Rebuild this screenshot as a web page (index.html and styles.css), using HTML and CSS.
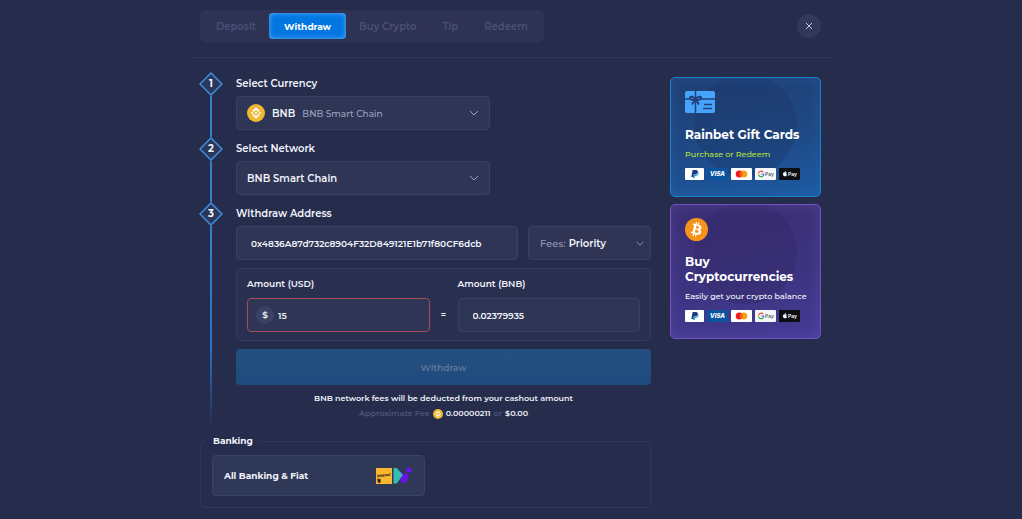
FILE: index.html
```html
<!DOCTYPE html>
<html lang="en">
<head>
    <meta charset="UTF-8">
    <meta name="viewport" content="width=device-width, initial-scale=1.0">
    <title>Withdraw</title>
    <link rel="stylesheet" href="styles.css">
</head>
<body>
    <!-- Shared logos -->
    <svg class="sprite" aria-hidden="true">
        <symbol id="bnb" viewBox="0 0 24 24">
            <circle cx="12" cy="12" r="12" fill="#f0b732"/>
            <path fill="#fff" d="M8.4 10.6 12 7l3.6 3.6 2.1-2.1L12 2.8 6.3 8.5zM3.8 12l2.1-2.1L8 12l-2.1 2.1zM8.4 13.4 12 17l3.6-3.6 2.1 2.1-5.7 5.7-5.7-5.7zM16 12l2.1-2.1 2.1 2.1-2.1 2.1zM12 9.8l2.2 2.2-2.2 2.2L9.8 12z" transform="translate(1.8 1.8) scale(.85)"/>
        </symbol>
        <symbol id="paypal" viewBox="0 0 19 12">
            <rect width="19" height="12" rx="1" fill="#fff"/>
            <path fill="#1b3d82" d="M7.6 2h3.2c1.7 0 2.4 1 2.1 2.3-.3 1.6-1.5 2.3-3 2.3H8.8L8.4 9H6.3z"/>
            <path fill="#179bd7" d="M13.2 4.2c.5.5.5 1.2.3 1.9-.4 1.3-1.4 1.8-2.7 1.8H10L9.6 10H7.9l.5-2.9h1.7c1.6 0 2.800-1 3.100-2.900z"/>
        </symbol>
        <symbol id="visa" viewBox="0 0 21 12">
            <rect width="21" height="12" rx="1" fill="#0a54a0"/>
            <text x="10.5" y="8.3" class="logo-text visa-text" fill="#fff">VISA</text>
        </symbol>
        <symbol id="mastercard" viewBox="0 0 21 12">
            <rect width="21" height="12" rx="1" fill="#fff"/>
            <circle cx="8.3" cy="6" r="3.6" fill="#eb1c26"/>
            <circle cx="12.7" cy="6" r="3.6" fill="#f79e1b"/>
            <path fill="#ff5f00" d="M10.5 3.2a3.6 3.6 0 0 1 0 5.6 3.6 3.6 0 0 1 0-5.6z"/>
        </symbol>
        <symbol id="gpay" viewBox="0 0 21 12">
            <rect width="21" height="12" rx="1" fill="#f5f6fa"/>
            <g fill="none" stroke-width="1.2">
                <path stroke="#ea4335" d="M3.6 4.9a2.7 2.7 0 0 1 4.5-.8"/>
                <path stroke="#fbbc05" d="M3.6 4.9a2.7 2.7 0 0 0 0 2.2"/>
                <path stroke="#34a853" d="M3.6 7.1a2.7 2.7 0 0 0 4.3.9"/>
                <path stroke="#4285f4" d="M6.1 6h2.7a2.7 2.7 0 0 1-.9 2"/>
            </g>
            <text x="14.5" y="8" class="logo-text" fill="#5f6368">Pay</text>
        </symbol>
        <symbol id="applepay" viewBox="0 0 21 12">
            <rect width="21" height="12" rx="1" fill="#0c0d12"/>
            <path fill="#fff" d="M6 4.4c.5-.3 1.4-.3 1.8.3-.8.5-.7 1.7.2 2.1-.3.8-.8 1.6-1.4 1.5-.4-.2-.7-.2-1.1 0C4.6 8.4 4 7.1 4 6.1c0-1.5 1.2-2.1 2-1.700zM5.900 4.100c0-.8.5-1.300 1.100-1.400 0 .8-.4 1.300-1.100 1.400z"/>
            <text x="13.5" y="8.2" class="logo-text" fill="#fff">Pay</text>
        </symbol>
    </svg>

    <div class="cashier">
        <header class="cashier-header">
            <nav class="tabs">
                <button type="button" class="tab">Deposit</button>
                <button type="button" class="tab active">Withdraw</button>
                <button type="button" class="tab">Buy Crypto</button>
                <button type="button" class="tab">Tip</button>
                <button type="button" class="tab">Redeem</button>
            </nav>
            <button type="button" class="close" aria-label="Close">
                <svg width="8" height="8" viewBox="0 0 8 8"><path d="M1 1l6 6M7 1L1 7"/></svg>
            </button>
        </header>

        <div class="cashier-body">
            <main class="main">
                <form class="steps">
                    <section class="step">
                        <div class="marker">
                            <svg class="diamond" viewBox="0 0 24 24"><path d="M12 1l11 11-11 11L1 12z"/></svg>
                            <span class="number">1</span>
                        </div>
                        <div class="step-content">
                            <label class="step-title" for="currency">Select Currency</label>
                            <div class="field narrow">
                                <svg class="coin" viewBox="0 0 24 24"><use href="#bnb"/></svg>
                                <span class="ticker">BNB</span>
                                <select id="currency" class="select muted">
                                    <option>BNB Smart Chain</option>
                                </select>
                            </div>
                        </div>
                    </section>

                    <section class="step">
                        <div class="marker">
                            <svg class="diamond" viewBox="0 0 24 24"><path d="M12 1l11 11-11 11L1 12z"/></svg>
                            <span class="number">2</span>
                        </div>
                        <div class="step-content">
                            <label class="step-title" for="network">Select Network</label>
                            <div class="field narrow">
                                <select id="network" class="select">
                                    <option>BNB Smart Chain</option>
                                </select>
                            </div>
                        </div>
                    </section>

                    <section class="step last">
                        <div class="marker">
                            <svg class="diamond" viewBox="0 0 24 24"><path d="M12 1l11 11-11 11L1 12z"/></svg>
                            <span class="number">3</span>
                        </div>
                        <div class="step-content">
                            <label class="step-title" for="address">Withdraw Address</label>
                            <div class="address-row">
                                <div class="field address">
                                    <input id="address" class="input" type="text" value="0x4836A87d732c8904F32D849121E1b71f80CF6dcb">
                                </div>
                                <div class="field fees">
                                    <label for="fees">Fees:</label>
                                    <select id="fees" class="select small">
                                        <option>Priority</option>
                                    </select>
                                </div>
                            </div>

                            <div class="amounts">
                                <div class="amount">
                                    <label for="usd">Amount (USD)</label>
                                    <div class="field error">
                                        <span class="dollar">$</span>
                                        <input id="usd" class="input" type="text" value="15">
                                    </div>
                                </div>
                                <span class="equals">=</span>
                                <div class="amount">
                                    <label for="bnb-amount">Amount (BNB)</label>
                                    <div class="field indent">
                                        <input id="bnb-amount" class="input" type="text" value="0.02379935">
                                    </div>
                                </div>
                            </div>

                            <button type="submit" class="submit" disabled>Withdraw</button>

                            <p class="note">BNB network fees will be deducted from your cashout amount</p>
                            <p class="note fee">
                                Approximate Fee
                                <svg class="coin-small" viewBox="0 0 24 24"><use href="#bnb"/></svg>
                                <strong>0.00000211</strong> or <strong>$0.00</strong>
                            </p>
                        </div>
                    </section>
                </form>

                <fieldset class="banking">
                    <legend>Banking</legend>
                    <button type="button" class="bank">
                        <span>All Banking &amp; Fiat</span>
                        <svg width="36" height="18" viewBox="0 0 36 18" aria-hidden="true">
                            <path fill="#6d0ff0" d="M25 3.5l2.7 4.3c1.2-.1 2.2-.8 2.5-2.3l2.6 2.4c-1.8 1.3-1.2 2.8-1.3 4.1-.4 2.9-2.7 4.5-6.5 4z"/>
                            <circle cx="33" cy="3" r="2.6" fill="#6d0ff0"/>
                            <path fill="#35bdb2" d="M17.5 1h3.3l6 7-6 8.5h-3.3z"/>
                            <rect y="1" width="16" height="16" fill="#fdb72c"/>
                            <text x="8" y="9.5" transform="rotate(-8 8 9)" class="logo-text interac-text" fill="#292522">Interac</text>
                            <path fill="#292522" d="M1.3 12l1-.8.7 1.2.7-.8 1.1 1-.3 2.7-1.5 1-1.3-1.5z"/>
                        </svg>
                    </button>
                </fieldset>
            </main>

            <aside class="promos">
                <a href="#" class="promo gift">
                    <span class="promo-icon">
                        <svg width="30" height="22" viewBox="0 0 30 22" aria-hidden="true">
                            <rect width="30" height="22" rx="2" fill="#45a5fb"/>
                            <path fill="none" stroke="#203f7c" stroke-width="1.5" d="M0 8h30M10.5 0v22"/>
                            <path fill="#45a5fb" stroke="#203f7c" stroke-width="2" d="M10.5 8.5C8 5 5 5 5 7s3 2.5 5.5 1.5zM10.5 8.5C13 5 16 5 16 7s-3 2.5-5.5 1.5z"/>
                            <path fill="none" stroke="#203f7c" stroke-width="2" d="M10.5 8.5l-3.5 5M10.5 8.5l3.5 5"/>
                            <path fill="none" stroke="#203f7c" stroke-width="1.5" d="M19 13.5h8M18 17.5h9"/>
                        </svg>
                    </span>
                    <span class="promo-title">Rainbet Gift Cards</span>
                    <span class="promo-text lime">Purchase or Redeem</span>
                    <span class="payments">
                        <svg width="19" height="12"><use href="#paypal"/></svg>
                        <svg width="21" height="12"><use href="#visa"/></svg>
                        <svg width="21" height="12"><use href="#mastercard"/></svg>
                        <svg width="21" height="12"><use href="#gpay"/></svg>
                        <svg width="21" height="12"><use href="#applepay"/></svg>
                    </span>
                </a>
                <a href="#" class="promo crypto">
                    <span class="promo-icon">
                        <svg width="23" height="23" viewBox="0 0 64 64" aria-hidden="true">
                            <circle cx="32" cy="32" r="32" fill="#f7931a"/>
                            <path fill="#fff" d="M46.1 27.4c.6-4.3-2.6-6.5-7-8l1.4-5.8-3.5-.9-1.4 5.6-2.8-.7 1.4-5.6-3.5-.9-1.4 5.8-2.2-.6-4.9-1.2-.9 3.7s2.6.6 2.5.6c1.4.4 1.7 1.3 1.6 2l-4 16c-.2.4-.6 1.1-1.6.8l-2.5-.6-1.8 4 6.9 1.7-1.5 5.9 3.5.9 1.5-5.8 2.8.7-1.5 5.8 3.5.9 1.5-5.9c6 1.1 10.5.7 12.4-4.7 1.5-4.4-.1-6.9-3.2-8.5 2.3-.5 4-2 4.7-5.2zm-8.1 11.3c-1.1 4.3-8.4 2-10.8 1.4l1.9-7.8c2.4.6 10 1.8 8.9 6.4zm1.1-11.4c-1 3.9-7 1.9-9 1.4l1.7-7c2 .5 8.4 1.4 7.3 5.6z"/>
                        </svg>
                    </span>
                    <span class="promo-title">Buy Cryptocurrencies</span>
                    <span class="promo-text">Easily get your crypto balance</span>
                    <span class="payments">
                        <svg width="19" height="12"><use href="#paypal"/></svg>
                        <svg width="21" height="12"><use href="#visa"/></svg>
                        <svg width="21" height="12"><use href="#mastercard"/></svg>
                        <svg width="21" height="12"><use href="#gpay"/></svg>
                        <svg width="21" height="12"><use href="#applepay"/></svg>
                    </span>
                </a>
            </aside>
        </div>
    </div>
</body>
</html>
```

FILE: styles.css
```css
* {
    box-sizing: border-box;
}

body {
    margin: 0;
    background: #262c4c;
    color: #f1f3fb;
    font-family: 'Montserrat', 'Inter', sans-serif;
    font-size: 9px;
    font-weight: 600;
}

button,
input,
select {
    font: inherit;
    color: inherit;
}

button {
    cursor: pointer;
}

.sprite {
    display: none;
}

.cashier {
    max-width: 640px;
    margin: 0 auto;
}

/* Header */
.cashier-header {
    display: flex;
    justify-content: space-between;
    align-items: center;
    padding: 10px 10px 15px 9px;
    border-bottom: 1px solid #30365a;
}

.tabs {
    display: flex;
    padding: 3px;
    border-radius: 6px;
    background: #2e3254;
}

.tab {
    height: 26px;
    padding: 0 13px;
    border: none;
    border-radius: 4px;
    background: none;
    color: #4b5078;
    font-size: 10px;
}

.tab.active {
    padding: 0 15px;
    background: #0277e2;
    box-shadow: inset 0 0 5px #66b2f5;
    color: #fff;
    font-size: 9px;
    font-weight: 700;
}

.close {
    display: flex;
    align-items: center;
    justify-content: center;
    width: 24px;
    height: 24px;
    padding: 0;
    border: none;
    border-radius: 50%;
    background: #323859;
}

.close svg {
    fill: none;
    stroke: #c4c9df;
    stroke-width: 1;
}

.cashier-body {
    display: flex;
    align-items: flex-start;
    gap: 19px;
    padding: 14px 10px 11px 9px;
}

.main {
    flex: 1;
    min-width: 0;
}

/* Steps */
.step {
    display: flex;
    gap: 14px;
}

.marker {
    position: relative;
    display: flex;
    flex-direction: column;
    align-items: center;
    width: 22px;
}

.marker::after {
    content: '';
    flex: 1;
    width: 2px;
    background: #367fc9;
}

.last .marker::after {
    background: linear-gradient(#367fc9, #2775c8 60%, transparent);
}

.diamond {
    width: 24px;
    height: 24px;
    fill: #2b3658;
    stroke: #3d90df;
    stroke-width: 1.5;
}

.number {
    position: absolute;
    top: 0;
    font-size: 10px;
    font-weight: 700;
    line-height: 24px;
}

.step-content {
    flex: 1;
    min-width: 0;
    padding-bottom: 7px;
}

.step-title {
    display: block;
    font-size: 10px;
    line-height: 24px;
}

.field {
    display: flex;
    align-items: center;
    height: 34px;
    padding: 0 10px;
    border: 1px solid #394161;
    border-radius: 4px;
    background: #2e3555;
}

.narrow {
    max-width: 254px;
}

.coin {
    width: 18px;
    height: 18px;
    margin-right: 7px;
}

.ticker {
    margin-right: 7px;
    font-size: 10px;
}

.select {
    flex: 1;
    min-width: 0;
    height: 100%;
    padding: 0;
    border: none;
    outline: none;
    appearance: none;
    background: url("data:image/svg+xml,%3Csvg xmlns='http://www.w3.org/2000/svg' width='10' height='6' fill='none' stroke='%239ca3c2'%3E%3Cpath d='M1 1l4 4 4-4'/%3E%3C/svg%3E") no-repeat right center;
    font-size: 10px;
}

.select.small {
    background-size: 8px 5px;
}

.select.muted {
    color: #9ca2c2;
    font-size: 9px;
    font-weight: 500;
}

.input {
    flex: 1;
    width: 100%;
    min-width: 0;
    padding: 0;
    border: none;
    outline: none;
    background: none;
}

.address-row {
    display: flex;
    gap: 10px;
    margin-bottom: 8px;
}

.address {
    flex: 1;
    padding: 0 14px;
}

.fees {
    width: 123px;
    gap: 3px;
    padding: 0 6px 0 11px;
    background: #303455;
}

.fees label {
    color: #9499bb;
    font-size: 10px;
    font-weight: 500;
}

/* Amounts */
.amounts {
    display: flex;
    align-items: flex-end;
    padding: 8px 10px;
    border: 1px solid #343b5c;
    border-radius: 4px;
    background: #293050;
}

.amount {
    flex: 1;
    min-width: 0;
}

.amount label {
    display: block;
    margin-bottom: 8px;
    line-height: 13px;
}

.error {
    padding: 0 8px;
    border-color: #a94a5a;
}

.indent {
    padding: 0 14px;
}

.dollar {
    width: 18px;
    margin-right: 4px;
    border-radius: 50%;
    background: #3a4263;
    line-height: 18px;
    text-align: center;
}

.equals {
    width: 28px;
    line-height: 34px;
    text-align: center;
}

.submit {
    width: 100%;
    height: 36px;
    margin: 8px 0 6px;
    border: none;
    border-radius: 4px;
    background: linear-gradient(#244f80, #1e4b7e);
    color: #627696;
    cursor: default;
}

.note {
    margin: 0;
    font-size: 8px;
    line-height: 15px;
    text-align: center;
}

.fee {
    display: flex;
    align-items: center;
    justify-content: center;
    gap: 3px;
    color: #4f567c;
}

.fee strong {
    color: #f1f3fb;
    font-weight: 600;
}

.coin-small {
    width: 10px;
    height: 10px;
}

/* Banking */
.banking {
    min-width: 0;
    margin: 6px 0 0;
    padding: 7px 11px 11px;
    border: 1px solid #30365a;
    border-radius: 4px;
}

.banking legend {
    margin-left: -6px;
    padding: 0 7px;
    font-weight: 700;
    line-height: 14px;
}

.bank {
    display: flex;
    align-items: center;
    justify-content: space-between;
    width: 213px;
    height: 41px;
    padding: 0 12px 0 11px;
    border: 1px solid #3b4365;
    border-radius: 4px;
    background: #303858;
    font-weight: 700;
}

/* Promo cards */
.promos {
    display: flex;
    flex-direction: column;
    gap: 7px;
    width: 151px;
    padding-top: 5px;
}

.promo {
    display: flex;
    flex-direction: column;
    padding: 13px 14px 16px;
    border: 1px solid;
    border-radius: 5px;
    color: #fff;
    text-decoration: none;
}

.gift {
    border-color: #1685c9;
    background:
        radial-gradient(circle at 50% 40%, rgba(24, 48, 96, 0.3) 51px, transparent 52px),
        linear-gradient(170deg, #213f74, #1f4a86 55%, #1d5ba3);
    box-shadow: inset 0 0 14px rgba(40, 110, 185, 0.35);
}

.crypto {
    border-color: #7551c2;
    background:
        radial-gradient(circle at 50% 36%, rgba(44, 34, 92, 0.3) 51px, transparent 52px),
        linear-gradient(170deg, #3b2f73, #3d3480 55%, #443c96);
    box-shadow: inset 0 0 14px rgba(110, 85, 190, 0.4);
}

.promo-icon {
    height: 24px;
    margin-bottom: 12px;
}

.promo-title {
    font-size: 12px;
    font-weight: 700;
    line-height: 15px;
}

.promo-text {
    margin: 6px 0 8px;
    font-size: 8px;
    font-weight: 500;
    line-height: 12px;
    white-space: nowrap;
}

.lime {
    color: #b5e33c;
}

.payments {
    display: flex;
    gap: 3px;
}

.logo-text {
    font-family: 'Inter', sans-serif;
    font-size: 5px;
    font-weight: 600;
    text-anchor: middle;
}

.visa-text {
    font-size: 6px;
    font-style: italic;
    font-weight: 800;
}

.interac-text {
    font-size: 4px;
    font-weight: 800;
}
```
